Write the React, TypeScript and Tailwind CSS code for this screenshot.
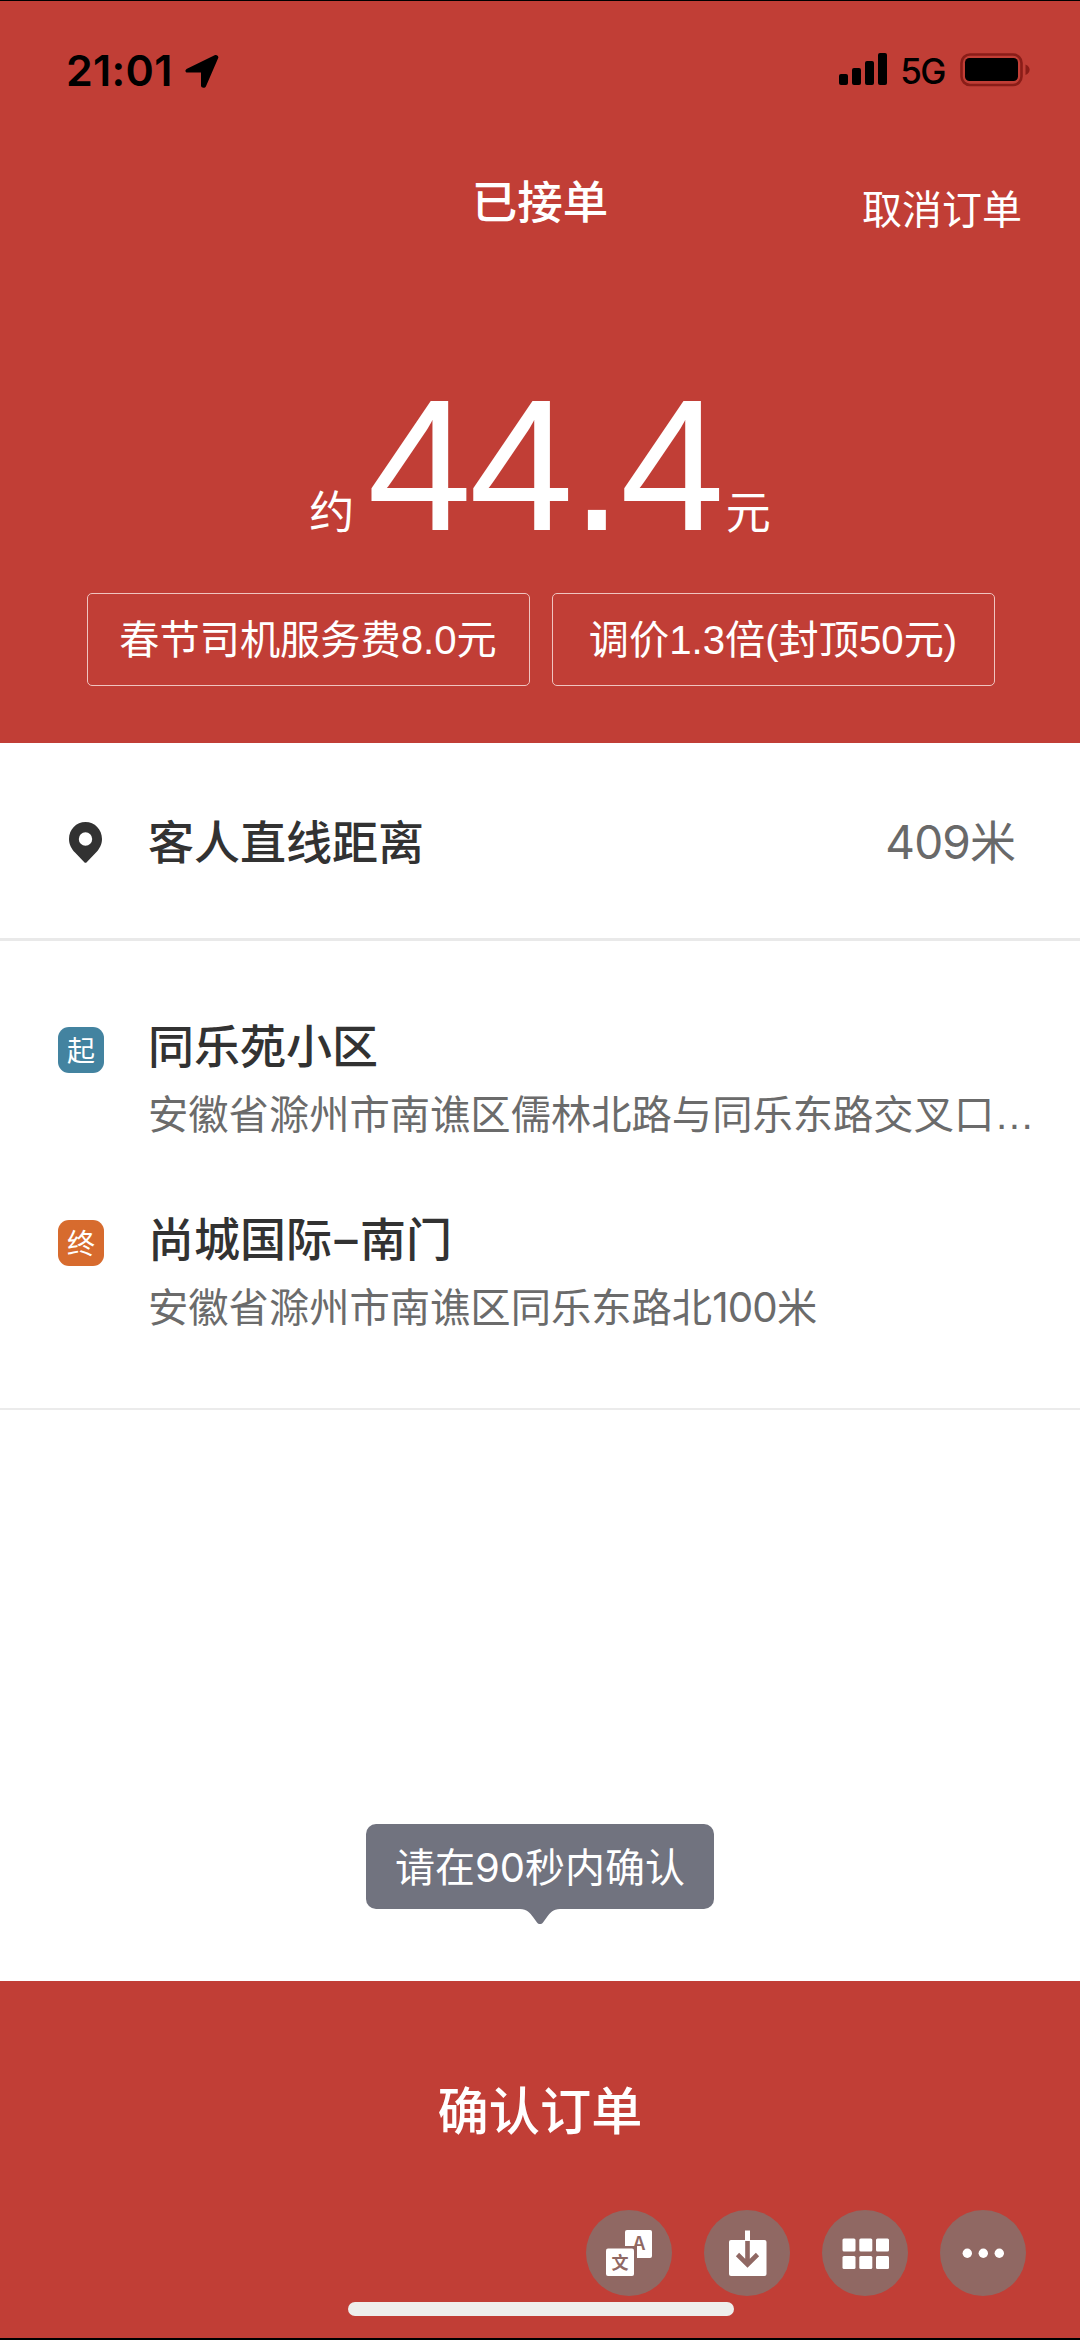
import type { ReactNode } from "react";

const stops = [
  {
    tag: "起",
    tagColor: "bg-[#4383a0]",
    name: "同乐苑小区",
    address: (
      <>
        安徽省滁州市南谯区儒林北路与同乐东路交叉口<span className="font-['Liberation_Sans',sans-serif]">…</span>
      </>
    ),
  },
  {
    tag: "终",
    tagColor: "bg-[#d76b2e]",
    name: (
      <>
        尚城国际<span className="mx-[2.500px]">–</span>南门
      </>
    ),
    address: (
      <>
        安徽省滁州市南谯区同乐东路北<span className="tracking-[-0.800px]">100</span>米
      </>
    ),
  },
];

const fees = ["春节司机服务费8.0元", "调价1.3倍(封顶50元)"];

function StatusBar() {
  return (
    <div className="flex h-[140px] items-start justify-between pt-[49px] pr-[50px] pl-[66px] text-black">
      <div className="flex items-center">
        <span className="font-['Inter',sans-serif] text-[43px] leading-[40px] font-semibold tracking-[0.300px]">21:01</span>
        <svg className="mt-px ml-[12px] h-[34px] w-[34px]" viewBox="0 0 34 34">
          <path d="M2.500 14.500 29.600 1.200c2-1 4.400.7 3.600 2.900L21 32.200c-1 2.400-5 1.900-5-.7V18.600H2.700C-.1 18.500-.5 16 2.500 14.500Z" fill="#000" />
        </svg>
      </div>
      <div className="flex items-start pt-[3px]">
        <svg className="h-8 w-12" viewBox="0 0 48 32" fill="#000">
          <rect x="0" y="21" width="9" height="11" rx="2" />
          <rect x="13" y="15" width="9" height="17" rx="2" />
          <rect x="26" y="8" width="9" height="24" rx="2" />
          <rect x="39" y="0" width="9" height="32" rx="2" />
        </svg>
        <span className="ml-[13px] font-['Inter',sans-serif] text-[35px] leading-[36px] font-medium tracking-[-1.500px]">5G</span>
        <svg className="ml-[15px] h-[34px] w-[70px]" viewBox="0 0 70 34">
          <rect x="1.500" y="1.500" width="60" height="30.500" rx="8.500" fill="none" stroke="#8a1d18" strokeWidth="2.600" />
          <rect x="5" y="5" width="53" height="23" rx="4.500" fill="#000" />
          <path d="M65.500 11.500c5.500 2 5.500 8.500 0 10.500Z" fill="#8a1d18" />
        </svg>
      </div>
    </div>
  );
}

function PinIcon() {
  return (
    <svg className="mt-[3px] h-[41px] w-[33px]" viewBox="0 0 33 41">
      <path
        fillRule="evenodd"
        fill="#323232"
        d="M16.500 0C7.300 0 0 7.400 0 17c0 5.800 2.600 9.700 6 13.600L15.300 40.300c.7.7 1.700.7 2.400 0L27 30.600c3.400-3.900 6-7.800 6-13.600C33 7.400 25.700 0 16.500 0Zm0 10.300a6.700 6.700 0 1 1 0 13.400 6.700 6.700 0 0 1 0-13.400Z"
      />
    </svg>
  );
}

function ToolButton({ children }: { children: ReactNode }) {
  return (
    <button className="h-[86px] w-[86px] rounded-full bg-[#906863]">
      <svg className="h-[86px] w-[86px]" viewBox="0 0 86 86" fill="#fff">
        {children}
      </svg>
    </button>
  );
}

function Toolbar() {
  return (
    <div className="flex justify-end gap-8 pr-[54px]">
      <ToolButton>
        <rect x="39" y="20" width="27" height="28" rx="2" />
        <text x="53" y="40" textAnchor="middle" fontSize="18" fontWeight="600" fill="#906863" className="font-['Inter',sans-serif]">A</text>
        <path d="M17 36h34v33H17z" fill="#906863" />
        <rect x="20" y="38.500" width="28" height="27.500" rx="2" />
        <text x="34" y="58.500" textAnchor="middle" fontSize="17" fontWeight="700" fill="#906863" className="font-['Noto_Sans_CJK_SC',sans-serif]">文</text>
      </ToolButton>
      <ToolButton>
        <rect x="25" y="30" width="37.500" height="36" rx="2" />
        <rect x="41" y="20.500" width="5" height="10" />
        <path d="M43.500 31v23.500M33.500 44.500l10 10 10-10" fill="none" stroke="#906863" strokeWidth="4.600" />
      </ToolButton>
      <ToolButton>
        {[28.5, 46].map((y) =>
          [20.5, 37.3, 54].map((x) => <rect key={`${x}-${y}`} x={x} y={y} width="13" height="13" rx="1.500" />)
        )}
      </ToolButton>
      <ToolButton>
        <circle cx="27.300" cy="43.300" r="4.700" />
        <circle cx="43.300" cy="43.300" r="4.700" />
        <circle cx="59.300" cy="43.300" r="4.700" />
      </ToolButton>
    </div>
  );
}

export default function App() {
  return (
    <div className="flex h-[2340px] w-[1080px] flex-col overflow-hidden border-t border-b-2 border-black bg-white font-['Inter','Noto_Sans_CJK_SC',sans-serif]">
      <header className="h-[742px] bg-[#c13e36] text-white">
        <StatusBar />
        <div className="grid h-[120px] grid-cols-3 items-start pt-[32px]">
          <h1 className="col-start-2 text-center text-[45.500px] leading-[60px] font-medium">已接单</h1>
          <button className="pt-[7px] pr-[58px] text-right text-[40px] leading-[60px]">取消订单</button>
        </div>
        <div className="flex h-[332px] items-end justify-center pb-[50px]">
          <span className="text-[45px] leading-[60px]">约</span>
          <span className="mr-[4px] mb-[6px] ml-[13px] font-['Liberation_Sans',sans-serif] text-[188px] leading-[144px] tracking-[-2.900px]">44.4</span>
          <span className="text-[45px] leading-[60px]">元</span>
        </div>
        <div className="flex justify-center gap-[22px] pl-px">
          {fees.map((fee) => (
            <div key={fee} className="flex h-[93px] w-[443px] items-center justify-center rounded-[5px] border border-[#f0c4c0] pt-[3px] font-['Liberation_Sans','Noto_Sans_CJK_SC',sans-serif] text-[40.200px]">
              {fee}
            </div>
          ))}
        </div>
      </header>

      <section className="flex h-[198px] items-center border-b-[3px] border-[#e9e9e9] pr-[65px] pl-[69px]">
        <PinIcon />
        <span className="mt-[4px] ml-[46px] flex-1 text-[46px] font-medium text-[#323232]">客人直线距离</span>
        <span className="mt-[4px] text-[46px] tracking-[-0.900px] text-[#696969]">409米</span>
      </section>

      <section className="h-[469px] border-b-2 border-[#ebebeb] pt-[75px] pl-[58px]">
        {stops.map((stop) => (
          <div key={stop.tag} className="flex h-[193px]">
            <div className={`mt-[11px] flex h-[46px] w-[46px] items-center justify-center rounded-[11px] pt-px text-[28px] text-white ${stop.tagColor}`}>{stop.tag}</div>
            <div className="ml-[44px] whitespace-nowrap">
              <div className="text-[46px] leading-[60px] font-medium text-[#323232]">{stop.name}</div>
              <div className="mt-[10px] text-[40.300px] leading-[58px] text-[#6b6b6b]">{stop.address}</div>
            </div>
          </div>
        ))}
      </section>

      <main className="flex flex-1 flex-col items-center justify-end pb-[57px]">
        <div className="flex h-[85px] w-[348px] items-center justify-center rounded-[10px] bg-[#71737f] pt-[2px] text-[40px] text-white">请在90秒内确认</div>
        <svg className="h-[15px] w-[40px]" viewBox="0 0 40 15">
          <path d="M0 0h40c-7 0-10 4-13 8l-4 5.500c-1.600 2-4.400 2-6 0L13 8C10 4 7 0 0 0Z" fill="#71737f" />
        </svg>
      </main>

      <footer className="flex h-[357px] flex-col bg-[#c13e36] pt-[95px] text-white">
        <button className="text-[51.200px] leading-[70px] font-medium">确认订单</button>
        <div className="pt-[64px]">
          <Toolbar />
        </div>
        <div className="mt-[6px] ml-[348px] h-[14px] w-[386px] rounded-full bg-[#eeeeec]" />
      </footer>
    </div>
  );
}
